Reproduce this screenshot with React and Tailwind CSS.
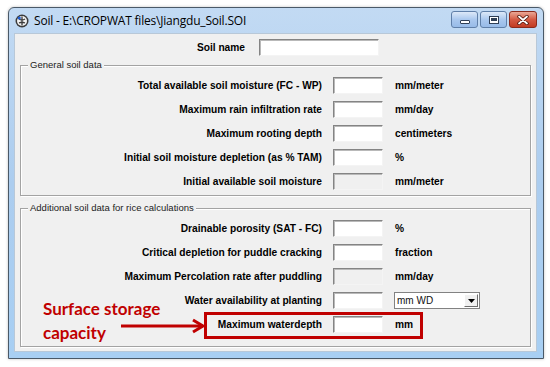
const labelCls = "font-bold text-[10.2px] text-black whitespace-nowrap";

const Field = ({ disabled }) => (
  <div
    className={`w-[50px] h-[17px] border border-t-[#848484] border-l-[#848484] border-r-[#f4f4f4] border-b-[#f4f4f4] shadow-[inset_1px_1px_0_#b9b9b9] ${
      disabled ? "bg-[#f0f0f0]" : "bg-white"
    }`}
  />
);

const Row = ({ label, unit, disabled, children }) => (
  <div className="flex items-center h-[17px]">
    <div className={`w-[301px] text-right ${labelCls}`}>{label}</div>
    <div className="ml-[11px]">
      <Field disabled={disabled} />
    </div>
    {children ? children : <div className={`ml-[12px] ${labelCls}`}>{unit}</div>}
  </div>
);

const GroupBox = ({ title, height, children, overlay }) => (
  <div
    className="relative border border-[#a3a3a3] shadow-[inset_1px_1px_0_#ffffff,1px_1px_0_#ffffff]"
    style={{ height }}
  >
    <div className="absolute left-[7px] top-[-7px] bg-[#f0f0f0] px-[2px] text-[9.5px] leading-[12px] text-[#222]">
      {title}
    </div>
    <div className="flex flex-col gap-[7px] pt-[11px]">{children}</div>
    {overlay}
  </div>
);

const CropwatIcon = () => (
  <svg width="14" height="14" viewBox="0 0 14 14">
    <circle cx="7" cy="7" r="6.5" fill="#3b3b3b" />
    <circle cx="7" cy="7" r="5" fill="#f2f2f2" />
    <path d="M7 2.5 L7 11.5 M4 5 Q7 7 10 5 M4 9 Q7 7.5 10 9" stroke="#3b3b3b" strokeWidth="1.3" fill="none" />
    <circle cx="4.3" cy="4" r="1.6" fill="#1f5fd6" />
  </svg>
);

const TitleButton = ({ kind }) => {
  const isClose = kind === "close";
  return (
    <div
      className={`h-[17px] flex items-center justify-center rounded-[3px] border ${
        isClose
          ? "w-[28px] border-[#8b2a1c] bg-gradient-to-b from-[#e9a796] via-[#d45a44] to-[#c23b22]"
          : "w-[27px] border-[#5f7fa8] bg-gradient-to-b from-[#dde9f8] via-[#aac8ee] to-[#97bbe8]"
      }`}
    >
      {kind === "min" && (
        <div className="w-[10px] h-[4px] mt-[4px] rounded-[1px] bg-white border border-[#2f3f55]" />
      )}
      {kind === "max" && (
        <div className="w-[10px] h-[8px] bg-white border border-[#2f3f55] flex items-center justify-center">
          <div className="w-[6px] h-[3px] bg-[#2f3f55]" />
        </div>
      )}
      {isClose && (
        <svg width="12" height="10" viewBox="0 0 12 10">
          <path d="M2 1.5 L10 8.5 M10 1.5 L2 8.5" stroke="#4a1208" strokeWidth="3.4" strokeLinecap="round" />
          <path d="M2 1.5 L10 8.5 M10 1.5 L2 8.5" stroke="#ffffff" strokeWidth="1.8" strokeLinecap="round" />
        </svg>
      )}
    </div>
  );
};

const Annotation = () => (
  <>
    <div className="absolute left-[183px] top-[103px] w-[219px] h-[27px] border-[3px] border-[#c00000]" />
    <div className="absolute left-[22px] top-[88px] font-bold text-[17px] leading-[24px] text-[#c00000] font-['Lato',sans-serif]">
      <div>Surface storage</div>
      <div>capacity</div>
    </div>
    <svg className="absolute left-[98px] top-[109px]" width="88" height="16" viewBox="0 0 88 16">
      <path d="M2 8 L84 8" stroke="#c00000" strokeWidth="3" />
      <path d="M74 2 L84 8 L74 14" stroke="#c00000" strokeWidth="3" fill="none" />
    </svg>
  </>
);

export default function App() {
  return (
    <div className="w-[550px] h-[367px] bg-white font-['Liberation_Sans',Arial,sans-serif] pt-[7px] pl-[8px]">
      <div className="w-[536px] h-[352px] flex flex-col rounded-t-[6px] border border-[#4a5968] bg-gradient-to-b from-[#c2daf3] via-[#accdef] to-[#a8cff3] shadow-[0_0_3px_rgba(0,0,0,0.25)]">
        {/* title bar */}
        <div className="h-[25px] flex items-center pl-[6px] pr-[6px]">
          <CropwatIcon />
          <div className="ml-[5px] text-[12px] text-black font-['Open_Sans',sans-serif] tracking-[-0.2px]">
            Soil - E:\CROPWAT files\Jiangdu_Soil.SOI
          </div>
          <div className="ml-auto flex gap-[2px] mt-[-2px]">
            <TitleButton kind="min" />
            <TitleButton kind="max" />
            <TitleButton kind="close" />
          </div>
        </div>

        {/* client area */}
        <div className="mx-[5px] w-[523px] h-[319px] bg-[#f0f0f0] border border-[#b8c8d8] px-[5px]">
          <div className="flex items-center h-[17px] mt-[5px]">
            <div className={`w-[225px] text-right ${labelCls}`}>Soil name</div>
            <div className="ml-[14px] w-[120px] h-[17px] bg-white border border-t-[#848484] border-l-[#848484] border-r-[#f4f4f4] border-b-[#f4f4f4] shadow-[inset_1px_1px_0_#b9b9b9]" />
          </div>

          <div className="mt-[9px]">
            <GroupBox title="General soil data" height={131}>
              <Row label="Total available soil moisture (FC - WP)" unit="mm/meter" />
              <Row label="Maximum rain infiltration rate" unit="mm/day" />
              <Row label="Maximum rooting depth" unit="centimeters" />
              <Row label="Initial soil moisture depletion (as % TAM)" unit="%" />
              <Row label="Initial available soil moisture" unit="mm/meter" disabled />
            </GroupBox>
          </div>

          <div className="mt-[12px]">
            <GroupBox title="Additional soil data for rice calculations" height={139} overlay={<Annotation />}>
              <Row label="Drainable porosity (SAT - FC)" unit="%" />
              <Row label="Critical depletion for puddle cracking" unit="fraction" />
              <Row label="Maximum Percolation rate after puddling" unit="mm/day" disabled />
              <Row label="Water availability at planting">
                <div className="ml-[11px] w-[86px] h-[17px] bg-white border border-[#828282] flex items-center">
                  <div className="pl-[2px] text-[10px] text-[#111] flex-1">mm WD</div>
                  <div className="w-[14px] h-[13px] mr-[1px] bg-[#f0f0f0] border border-t-white border-l-white border-r-[#6d6d6d] border-b-[#6d6d6d] flex items-center justify-center">
                    <svg width="7" height="4" viewBox="0 0 7 4">
                      <path d="M0 0 L7 0 L3.5 4 Z" fill="#000" />
                    </svg>
                  </div>
                </div>
              </Row>
              <Row label="Maximum waterdepth" unit="mm" />
            </GroupBox>
          </div>
        </div>
      </div>
    </div>
  );
}
